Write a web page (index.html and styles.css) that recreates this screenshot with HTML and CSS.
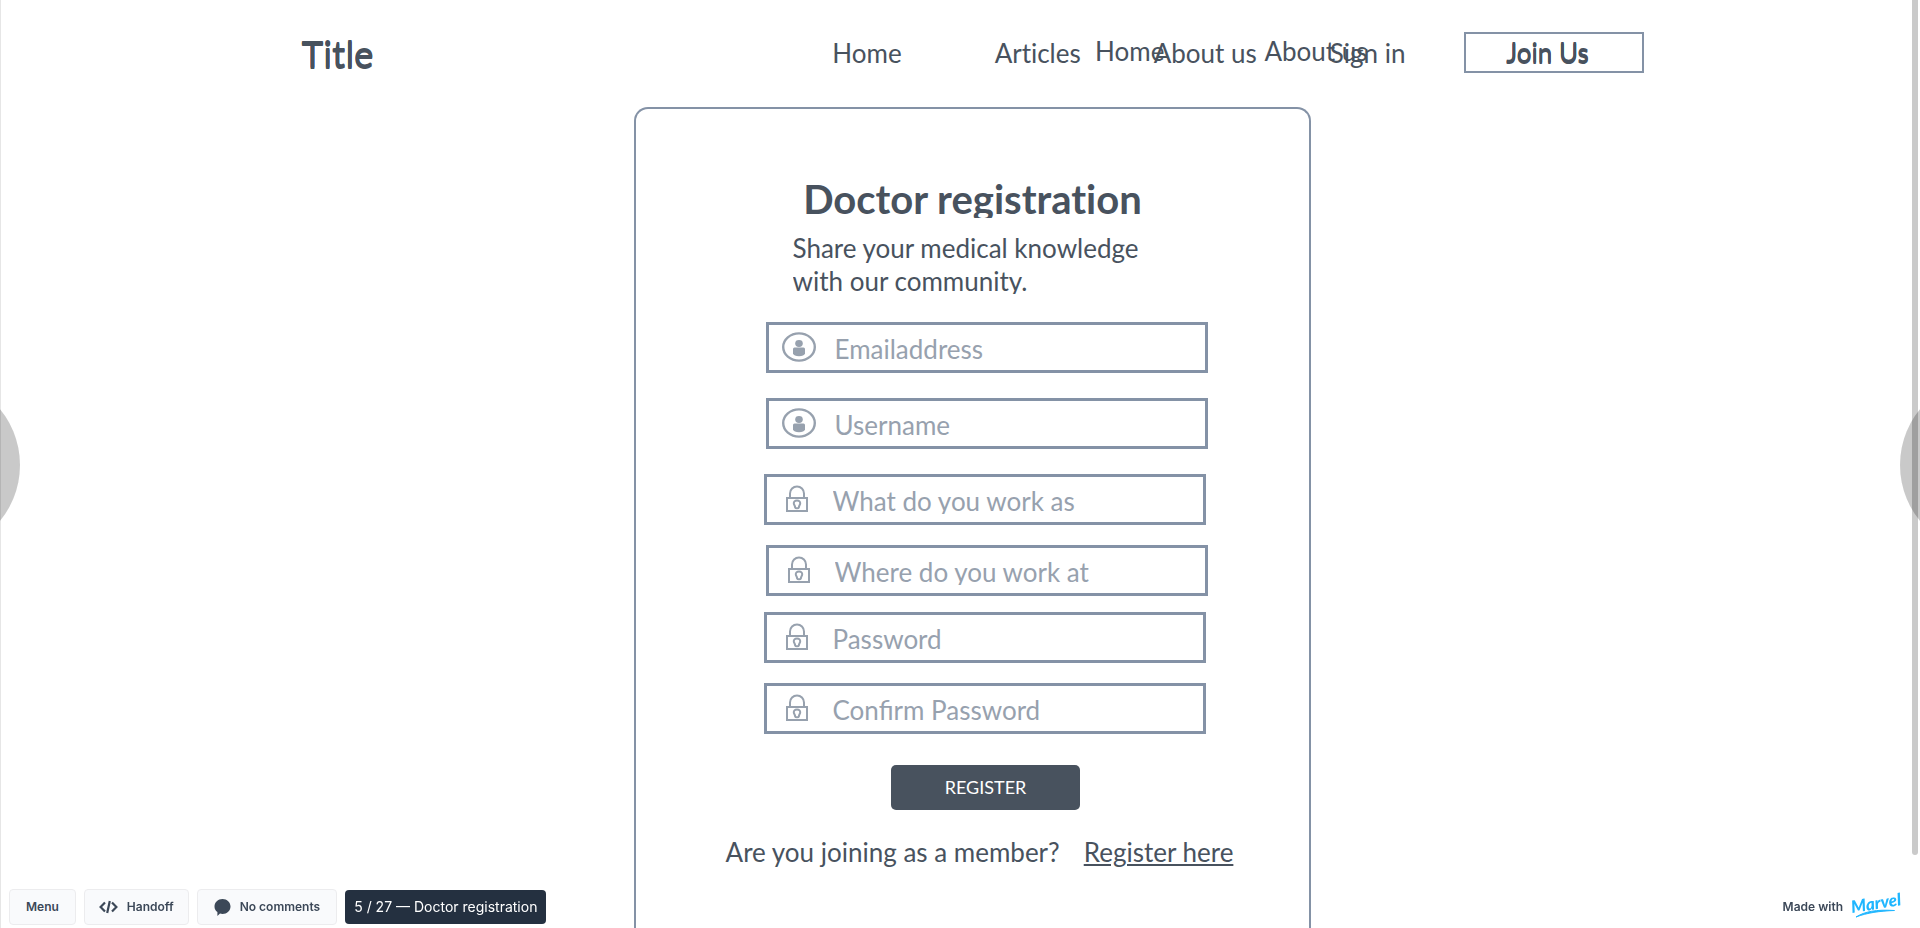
FILE: index.html
```html
<!DOCTYPE html>
<html lang="en">
<head>
<meta charset="utf-8">
<meta name="viewport" content="width=device-width, initial-scale=1">
<title>Doctor registration</title>
<link rel="stylesheet" href="styles.css">
</head>
<body>
<svg class="sprite" aria-hidden="true">
  <symbol id="user" viewBox="0 0 34 30">
    <ellipse cx="17" cy="15" rx="15.8" ry="13.6" fill="none" stroke="currentColor" stroke-width="2.400"/>
    <ellipse cx="17" cy="11.5" rx="3.8" ry="3.4" fill="currentColor"/>
    <path d="M11 17q0-1.500 1.500-1.500h9q1.500 0 1.500 1.500v4.500q-1 2.700-6 2.700t-6-2.700z" fill="currentColor"/>
  </symbol>
  <symbol id="lock" viewBox="0 0 22 28">
    <g fill="none" stroke="currentColor" stroke-width="2">
      <path d="M1 13h20v13H1z"/>
      <path d="M4 12.500V8.500a7 7 0 0 1 14 0v4"/>
      <path d="M11 15.500c2.300 0 3.300 1.400 3.200 3-.1 1.400-1.200 1.900-1.400 4.200-.3.800-3.300.8-3.600 0-.2-2.300-1.300-2.800-1.400-4.200-.1-1.600.9-3 3.200-3z"/>
    </g>
  </symbol>
</svg>

<header class="header">
  <a class="brand" href="#">Title</a>
  <nav class="nav">
    <a class="nav-home" href="#">Home</a>
    <a href="#">Articles</a>
    <a href="#">About us</a>
    <a href="#">Sign in</a>
    <div class="nav-over">
      <a href="#">Home</a>
      <a href="#">About us</a>
    </div>
  </nav>
  <button class="join" type="button">Join Us</button>
</header>

<main class="card">
  <h1 class="heading">Doctor registration</h1>
  <p class="intro">Share your medical knowledge with our community.</p>
  <form class="form">
    <label class="field inset"><svg class="icon-user"><use href="#user"/></svg><span class="field-text"><input type="email" placeholder="Emailaddress"></span></label>
    <label class="field inset"><svg class="icon-user"><use href="#user"/></svg><span class="field-text"><input type="text" placeholder="Username"></span></label>
    <label class="field"><svg class="icon-lock"><use href="#lock"/></svg><span class="field-text"><input type="text" placeholder="What do you work as"></span></label>
    <label class="field inset close"><svg class="icon-lock"><use href="#lock"/></svg><span class="field-text"><input type="text" placeholder="Where do you work at"></span></label>
    <label class="field tight"><svg class="icon-lock"><use href="#lock"/></svg><span class="field-text"><input type="password" placeholder="Password"></span></label>
    <label class="field close"><svg class="icon-lock"><use href="#lock"/></svg><span class="field-text"><input type="password" placeholder="Confirm Password"></span></label>
    <button class="register" type="button">REGISTER</button>
  </form>
  <p class="switch"><span>Are you joining as a member?</span><a href="#">Register here</a></p>
</main>

<button class="pager pager-prev" type="button" aria-label="Previous"></button>
<div class="scrollbar"></div>
<button class="pager pager-next" type="button" aria-label="Next"></button>

<footer class="toolbar">
  <button class="tool" type="button">Menu</button>
  <button class="tool tool-icon" type="button">
    <svg width="19" height="14" viewBox="0 0 19 14" fill="none" stroke="currentColor" stroke-width="2.200"><path d="M6 2.500L1.600 7L6 11.500M13 2.500L17.400 7L13 11.500M10.800 1L8.200 13"/></svg>
    Handoff
  </button>
  <button class="tool" type="button">
    <svg width="17" height="17" viewBox="0 0 17 17" fill="currentColor"><path d="M8.500 0C13 0 16.500 3.200 16.500 7.500S13 15 8.500 15c-.9 0-1.700-.1-2.500-.4L3.400 17v-4C1.400 11.700.5 9.800.5 7.500.5 3.200 4 0 8.500 0z"/></svg>
    No comments
  </button>
  <span class="status">5 / 27 — Doctor registration</span>
  <a class="made" href="#">Made with
    <svg class="marvel" width="52" height="24" viewBox="0 0 52 24">
      <text x="1" y="18" transform="rotate(-9 1 18)">Marvel</text>
      <path d="M5 22C14 16.500 25 14.300 43.500 15.500C29 16 16 17.800 5 22z"/>
    </svg>
  </a>
</footer>
</body>
</html>
```
FILE: styles.css
```css
* {
  box-sizing: border-box;
}

body {
  margin: 0;
  height: 100vh;
  overflow: hidden;
  display: flex;
  flex-direction: column;
  align-items: center;
  padding-left: 24px;
  border-left: 1px solid #e6e6e6;
  background: #fff;
  color: #48525e;
  font: 26px/33px Lato, sans-serif;
  font-variant-ligatures: none;
}

a {
  color: inherit;
  text-decoration: none;
}

button,
input {
  font: inherit;
  color: inherit;
}

.sprite {
  position: absolute;
  width: 0;
  height: 0;
}

.header {
  width: 100%;
  max-width: 1342px;
  height: 107px;
  padding-top: 32px;
  display: flex;
  align-items: flex-start;
  flex-shrink: 0;
}

.brand {
  margin-right: auto;
  font-size: 37px;
  line-height: 42px;
  text-shadow: 0 1px #48525e, 0 2px #48525e;
}

.nav {
  position: relative;
  display: flex;
  gap: 73px;
  margin: 5px 58px 0 0;
}

.nav-home {
  margin-right: 20px;
}

.nav-over {
  position: absolute;
  top: -2px;
  right: 38px;
  display: flex;
  gap: 100px;
}

.join {
  width: 180px;
  height: 41px;
  padding: 0 12px 0 0;
  border: 2px solid #8492a6;
  background: none;
  text-shadow: 0 1px #48525e, 0 2px #48525e;
}

.card {
  width: 100%;
  max-width: 677px;
  flex: 1 0 auto;
  padding-top: 66px;
  display: flex;
  flex-direction: column;
  align-items: center;
  border: 2px solid #8492a6;
  border-bottom: 0;
  border-radius: 14px 14px 0 0;
}

.heading {
  margin: 0 0 14px;
  height: 43px;
  overflow: hidden;
  font-size: 40px;
  line-height: 48px;
}

.intro {
  width: 360px;
  height: 62px;
  margin: 0 0 28px;
  overflow: hidden;
}

.form {
  width: 444px;
  margin-left: 26px;
  display: flex;
  flex-direction: column;
}

.field {
  width: 442px;
  height: 51px;
  padding: 7px 12px 0 13px;
  display: flex;
  align-items: flex-start;
  border: 3px solid #8492a6;
  color: #97a1ae;
  font-variant-ligatures: normal;
}

.field + .field {
  margin-top: 25px;
}

.field + .close {
  margin-top: 20px;
}

.field + .tight {
  margin-top: 16px;
}

.inset {
  margin-left: 2px;
}

.icon-user {
  width: 34px;
  height: 30px;
  margin-right: 19px;
}

.icon-lock {
  width: 22px;
  height: 28px;
  margin: 1px 25px 0 6px;
}

.field-text {
  flex: 1;
  height: 30px;
  overflow: hidden;
}

.field input {
  display: block;
  width: 100%;
  height: 34px;
  padding: 0;
  border: 0;
  outline: 0;
  background: none;
}

.field input::placeholder {
  color: #97a1ae;
  opacity: 1;
}

.register {
  width: 189px;
  height: 45px;
  margin: 31px auto 26px;
  border: 0;
  border-radius: 5px;
  background: #48525e;
  color: #fff;
  font-size: 18px;
}

.switch {
  display: flex;
  gap: 24px;
  margin: 0 0 0 14px;
}

.switch a {
  text-decoration: underline;
}

.scrollbar {
  position: fixed;
  top: 0;
  right: 2px;
  width: 6px;
  height: 855px;
  border-radius: 0 0 3px 3px;
  background: #cacaca;
}

.pager {
  position: fixed;
  top: 50%;
  width: 176px;
  height: 176px;
  margin-top: -87px;
  border: 0;
  border-radius: 50%;
  background: rgba(0, 0, 0, 0.21);
}

.pager-prev {
  left: -156px;
}

.pager-next {
  right: -156px;
}

.toolbar {
  position: fixed;
  left: 9px;
  right: 17px;
  bottom: 3px;
  display: flex;
  align-items: center;
  gap: 8px;
  color: #3c4858;
  font: 600 12px/16px Inter, sans-serif;
}

.tool {
  height: 36px;
  padding: 0 16px;
  display: flex;
  align-items: center;
  gap: 9px;
  border: 1px solid #ececee;
  border-radius: 4px;
  background: #f9fafc;
}

.tool-icon {
  padding: 0 14px;
}

.status {
  height: 34px;
  padding: 0 9px;
  border-radius: 4px;
  background: #243040;
  color: #fff;
  font-size: 14px;
  font-weight: 400;
  line-height: 34px;
}

.made {
  margin-left: auto;
  display: flex;
  align-items: center;
  gap: 8px;
}

.marvel {
  overflow: visible;
  fill: #1fb6ff;
  stroke: #1fb6ff;
  font: italic 900 17px Lato, sans-serif;
}

.marvel text {
  stroke: none;
}
```
